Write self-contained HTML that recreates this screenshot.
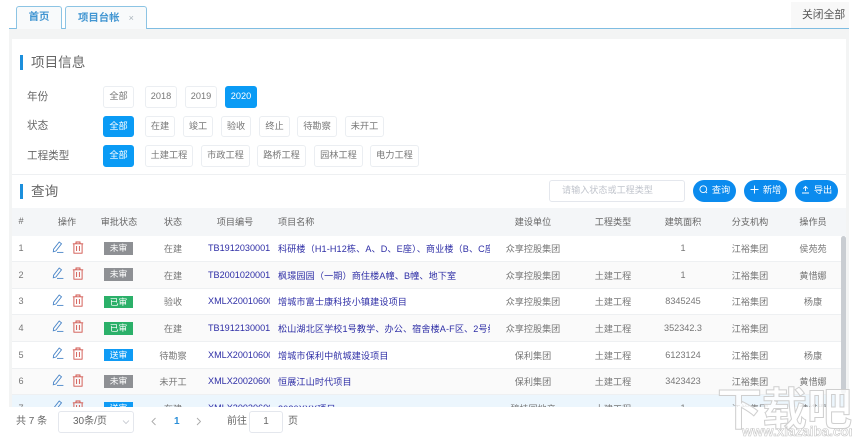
<!DOCTYPE html>
<html lang="zh"><head><meta charset="utf-8"><title>项目台帐</title>
<style>
*{box-sizing:border-box;margin:0;padding:0}
html,body{width:852px;height:438px;overflow:hidden;background:#fff}
body{font-family:"Liberation Sans","Noto Sans CJK SC",sans-serif;color:#777;font-size:9.1px}
#w{position:absolute;left:0;top:0;width:852px;height:438px;overflow:hidden;filter:blur(.35px);background:#fff}
.a{position:absolute;white-space:nowrap}
.tab{position:absolute;top:6px;height:23px;border:1px solid #8cc4e4;border-bottom:0;border-radius:3px 3px 0 0;background:#f8fafb;color:#4296d2;font-size:10.4px;font-weight:bold;line-height:22px;text-align:center}
.chip{position:absolute;height:21.5px;border:1px solid #ebeef2;border-radius:3px;background:#fff;color:#777;font-size:9.2px;line-height:19.5px;text-align:center}
.chip.on{background:#0a9bf5;border-color:#0a9bf5;color:#fff}
.lab{position:absolute;left:27px;font-size:10.6px;color:#666;line-height:14px}
.bar{position:absolute;left:20px;width:2.5px;background:#1c8fdc}
.ttl{position:absolute;left:31px;font-size:13.6px;color:#666;line-height:18px}
.btn{position:absolute;top:180px;width:43px;height:21.5px;border-radius:11px;background:#0b8bee;color:#fff;font-size:9.2px;line-height:21px;text-align:center}
.h,.r{position:absolute;left:12px;width:834px}
.h{top:208px;height:28px;background:#f4f6f8;color:#666}
.h .c{bottom:2px}
.r{border-bottom:1px solid #eef0f2}
.c{position:absolute;top:0;bottom:0;display:flex;align-items:center;justify-content:center;white-space:nowrap;overflow:hidden}
.id{left:196px;width:62px;justify-content:flex-start;color:#2e2ea6}
.nm{left:266px;width:212px;justify-content:flex-start;color:#2e2ea6;letter-spacing:.12px}
.n{left:0;width:18px}.st{left:136px;width:50px}.co{left:481px;width:80px}.ty{left:571px;width:60px}.ar{left:641px;width:60px}.br{left:708px;width:60px}.op{left:771px;width:60px}
.tag{position:absolute;left:92px;width:29px;height:12.5px;color:#fff;font-size:8.8px;line-height:12.5px;text-align:center}
.g{background:#8e9094}.v{background:#2bb069}.b{background:#0f9bf5}
.i1{position:absolute;left:40px}.i2{position:absolute;left:60px}
</style></head><body><div id="w">

<div class="a" style="left:9px;top:29px;width:840px;height:378px;background:#f3f4f4"></div>
<div class="a" style="left:9px;top:28px;width:840px;height:1px;background:#7fbde2"></div>
<div class="tab" style="left:16px;width:46px">首页</div>
<div class="tab" style="left:65px;width:82px;text-align:left;padding-left:12px">项目台帐<span style="color:#a9b4bc;font-weight:normal;font-size:9px;margin-left:9px">×</span></div>
<div class="a" style="left:791px;top:2px;width:58px;height:26px;background:#f8f8f8;color:#555;font-size:10.8px;line-height:26px;padding-left:11px">关闭全部</div>

<div class="a" style="left:12px;top:39px;width:834px;height:369px;background:#fff"></div>
<div class="bar" style="top:55px;height:15px"></div><div class="ttl" style="top:54px">项目信息</div>

<div class="lab" style="top:90px">年份</div>
<div class="chip" style="left:103px;top:86px;width:31px">全部</div>
<div class="chip" style="left:145px;top:86px;width:32px">2018</div>
<div class="chip" style="left:185px;top:86px;width:32px">2019</div>
<div class="chip on" style="left:225px;top:86px;width:32px">2020</div>

<div class="lab" style="top:119px">状态</div>
<div class="chip on" style="left:103px;top:115.5px;width:31px">全部</div>
<div class="chip" style="left:145px;top:115.5px;width:30px">在建</div>
<div class="chip" style="left:183px;top:115.5px;width:30px">竣工</div>
<div class="chip" style="left:221px;top:115.5px;width:30px">验收</div>
<div class="chip" style="left:259px;top:115.5px;width:31px">终止</div>
<div class="chip" style="left:297px;top:115.5px;width:40px">待勘察</div>
<div class="chip" style="left:345px;top:115.5px;width:39px">未开工</div>

<div class="lab" style="top:149px">工程类型</div>
<div class="chip on" style="left:103px;top:145px;width:31px">全部</div>
<div class="chip" style="left:145px;top:145px;width:48px">土建工程</div>
<div class="chip" style="left:201px;top:145px;width:49px">市政工程</div>
<div class="chip" style="left:257px;top:145px;width:49px">路桥工程</div>
<div class="chip" style="left:314px;top:145px;width:49px">园林工程</div>
<div class="chip" style="left:370px;top:145px;width:49px">电力工程</div>

<div class="a" style="left:12px;top:174px;width:834px;height:1px;background:#eef0f2"></div>
<div class="bar" style="top:184px;height:15px"></div><div class="ttl" style="top:183px">查询</div>
<div class="a" style="left:549px;top:180px;width:136px;height:21.5px;border:1px solid #e4e7ed;border-radius:3px;color:#c0c4cc;font-size:9.1px;line-height:19.5px;padding-left:12px">请输入状态或工程类型</div>
<div class="btn" style="left:693px"><svg width="9" height="9" viewBox="0 0 9 9" style="vertical-align:-1px;margin-right:4px" fill="none" stroke="#fff" stroke-width=".9"><circle cx="4.3" cy="4.2" r="3.4"/><path d="M6.6 6.6L8 8"/></svg>查询</div>
<div class="btn" style="left:744px"><svg width="9" height="9" viewBox="0 0 9 9" style="vertical-align:-1px;margin-right:4px" fill="none" stroke="#fff" stroke-width=".9"><path d="M4.5 .5v8M.5 4.5h8"/></svg>新增</div>
<div class="btn" style="left:795px"><svg width="9" height="9" viewBox="0 0 9 9" style="vertical-align:-1px;margin-right:4px" fill="none" stroke="#fff" stroke-width=".9"><path d="M1 8h7M4.5 6V1.5M2.3 3.6L4.5 1.4l2.2 2.2"/></svg>导出</div>

<div class="h">
<span class="c" style="left:0;width:18px">#</span><span class="c" style="left:40px;width:30px">操作</span><span class="c" style="left:82px;width:50px">审批状态</span><span class="c" style="left:141px;width:40px">状态</span><span class="c" style="left:198px;width:50px">项目编号</span><span class="c" style="left:266px;width:50px;justify-content:flex-start">项目名称</span><span class="c co">建设单位</span><span class="c ty">工程类型</span><span class="c ar">建筑面积</span><span class="c br">分支机构</span><span class="c op">操作员</span>
</div>

<svg width="0" height="0" style="position:absolute"><defs>
<g id="pen" fill="none" stroke="#4a86c8" stroke-width=".9"><path d="M1.6 8.2L7.2 1l2.3 1.8-5.6 7.2-2.6.8z"/><path d="M5 11.4h6.4"/></g>
<g id="bin" fill="none" stroke="#d0524a" stroke-width=".9"><path d="M.8 2.8h10.4M4 2.8V1h4v1.8M1.9 2.8v9.4h8.2V2.8M4.6 5v5M7.4 5v5"/></g>
</defs></svg>

<div class="r" style="top:236px;height:25.5px;background:#fff"><span class="c n">1</span><svg class="i1" style="top:5px" width="12" height="12"><use href="#pen"/></svg><svg class="i2" style="top:5px" width="12" height="13"><use href="#bin"/></svg><span class="tag g" style="top:6px">未审</span><span class="c st">在建</span><span class="c id">TB1912030001</span><span class="c nm">科研楼（H1-H12栋、A、D、E座）、商业楼（B、C座）</span><span class="c co">众享控股集团</span><span class="c ar">1</span><span class="c br">江裕集团</span><span class="c op">侯苑苑</span></div>

<div class="r" style="top:261.5px;height:27px;background:#fafafa"><span class="c n">2</span><svg class="i1" style="top:5.5px" width="12" height="12"><use href="#pen"/></svg><svg class="i2" style="top:5.5px" width="12" height="13"><use href="#bin"/></svg><span class="tag g" style="top:6.5px">未审</span><span class="c st">在建</span><span class="c id">TB2001020001</span><span class="c nm">枫璟园园（一期）商住楼A幢、B幢、地下室</span><span class="c co">众享控股集团</span><span class="c ty">土建工程</span><span class="c ar">1</span><span class="c br">江裕集团</span><span class="c op">黄惜娜</span></div>

<div class="r" style="top:288.5px;height:26.5px;background:#fff"><span class="c n">3</span><svg class="i1" style="top:5px" width="12" height="12"><use href="#pen"/></svg><svg class="i2" style="top:5px" width="12" height="13"><use href="#bin"/></svg><span class="tag v" style="top:7px">已审</span><span class="c st">验收</span><span class="c id">XMLX2001060001</span><span class="c nm">增城市富士康科技小镇建设项目</span><span class="c co">众享控股集团</span><span class="c ty">土建工程</span><span class="c ar">8345245</span><span class="c br">江裕集团</span><span class="c op">杨康</span></div>

<div class="r" style="top:315px;height:26.5px;background:#fafafa"><span class="c n">4</span><svg class="i1" style="top:5px" width="12" height="12"><use href="#pen"/></svg><svg class="i2" style="top:5px" width="12" height="13"><use href="#bin"/></svg><span class="tag v" style="top:7px">已审</span><span class="c st">在建</span><span class="c id">TB1912130001</span><span class="c nm">松山湖北区学校1号教学、办公、宿舍楼A-F区、2号综合楼</span><span class="c co">众享控股集团</span><span class="c ty">土建工程</span><span class="c ar">352342.3</span><span class="c br">江裕集团</span></div>

<div class="r" style="top:341.5px;height:27px;background:#fff"><span class="c n">5</span><svg class="i1" style="top:5.5px" width="12" height="12"><use href="#pen"/></svg><svg class="i2" style="top:5.5px" width="12" height="13"><use href="#bin"/></svg><span class="tag b" style="top:7px">送审</span><span class="c st">待勘察</span><span class="c id">XMLX2001060002</span><span class="c nm">增城市保利中航城建设项目</span><span class="c co">保利集团</span><span class="c ty">土建工程</span><span class="c ar">6123124</span><span class="c br">江裕集团</span><span class="c op">杨康</span></div>

<div class="r" style="top:368.5px;height:26.5px;background:#fafafa"><span class="c n">6</span><svg class="i1" style="top:5px" width="12" height="12"><use href="#pen"/></svg><svg class="i2" style="top:5px" width="12" height="13"><use href="#bin"/></svg><span class="tag g" style="top:6.5px">未审</span><span class="c st">未开工</span><span class="c id">XMLX2002060001</span><span class="c nm">恒展江山时代项目</span><span class="c co">保利集团</span><span class="c ty">土建工程</span><span class="c ar">3423423</span><span class="c br">江裕集团</span><span class="c op">黄惜娜</span></div>

<div class="r" style="top:395px;height:27px;background:#ecf6fd"><span class="c n">7</span><svg class="i1" style="top:5px" width="12" height="12"><use href="#pen"/></svg><svg class="i2" style="top:5px" width="12" height="13"><use href="#bin"/></svg><span class="tag b" style="top:6.5px">送审</span><span class="c st">在建</span><span class="c id">XMLX2002060002</span><span class="c nm">2020XXX项目</span><span class="c co">碧桂园地产</span><span class="c ty">土建工程</span><span class="c ar">1</span><span class="c br">江裕集团</span><span class="c op">黄惜娜</span></div>

<div class="a" style="left:841px;top:236px;width:5px;height:158px;background:#c9cdd2;border-radius:3px"></div>

<div class="a" style="left:0;top:407px;width:852px;height:31px;background:#fff"></div>
<div class="a" style="left:16px;top:415px;font-size:10px;color:#666;line-height:14px">共 7 条</div>
<div class="a" style="left:58px;top:411px;width:76px;height:21.5px;border:1px solid #e4e7ed;border-radius:3px;font-size:10px;line-height:19.5px;padding-left:14px;color:#666">30条/页</div>
<svg class="a" style="left:122px;top:419px" width="8" height="6" fill="none" stroke="#c0c4cc" stroke-width=".8"><path d="M1 1.5l3 3 3-3"/></svg>
<svg class="a" style="left:151px;top:417px" width="6" height="9" fill="none" stroke="#aaa" stroke-width=".9"><path d="M4.5 1L1 4.5 4.5 8"/></svg>
<div class="a" style="left:174px;top:415px;font-size:10px;font-weight:bold;color:#2b8fd8;line-height:14px">1</div>
<svg class="a" style="left:196px;top:417px" width="6" height="9" fill="none" stroke="#aaa" stroke-width=".9"><path d="M1 1l3.5 3.5L1 8"/></svg>
<div class="a" style="left:227px;top:415px;font-size:10px;color:#666;line-height:14px">前往</div>
<div class="a" style="left:249px;top:411px;width:34px;height:21.5px;border:1px solid #e4e7ed;border-radius:3px;font-size:10px;line-height:19.5px;text-align:center;color:#666">1</div>
<div class="a" style="left:288px;top:415px;font-size:10px;color:#666;line-height:14px">页</div>

<svg class="a" style="left:700px;top:370px" width="152" height="68" font-family="'Noto Sans CJK SC',sans-serif">
<text x="17" y="55" font-size="45" font-weight="bold" fill="#fff" fill-opacity=".8" stroke="#cfcfcf" stroke-width="1">下载吧</text>
<text x="42" y="66" font-family="'Liberation Sans',sans-serif" font-size="13.5" font-weight="bold" fill="#fff" stroke="#c8c8c8" stroke-width=".6">www.xiazaiba.com</text>
</svg>
</div></body></html>
